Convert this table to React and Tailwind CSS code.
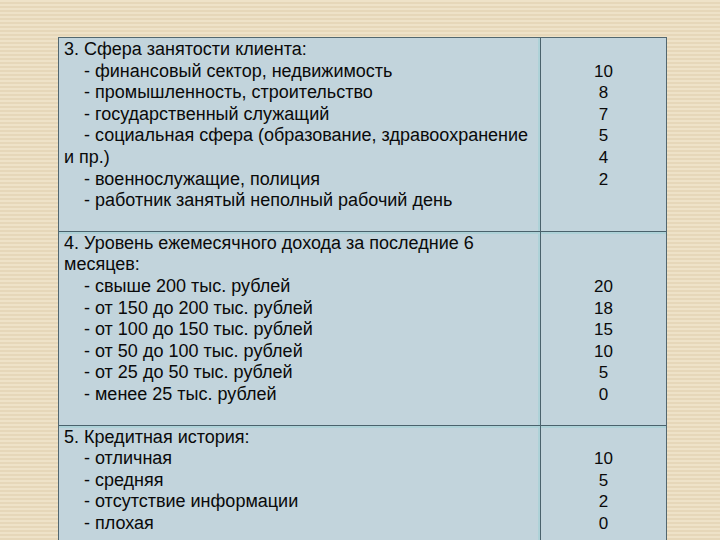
import React from "react";

const rows = [
  {
    lines: [
      { t: "3. Сфера занятости клиента:", i: false },
      { t: "- финансовый сектор, недвижимость", i: true },
      { t: "- промышленность, строительство", i: true },
      { t: "- государственный служащий", i: true },
      { t: "- социальная сфера (образование, здравоохранение", i: true },
      { t: "и пр.)", i: false },
      { t: "- военнослужащие, полиция", i: true },
      { t: "- работник занятый неполный рабочий день", i: true },
    ],
    skip: 1,
    nums: ["10", "8", "7", "5", "4", "2"],
  },
  {
    lines: [
      { t: "4. Уровень ежемесячного дохода за последние 6", i: false },
      { t: "месяцев:", i: false },
      { t: "- свыше 200 тыс. рублей", i: true },
      { t: "- от 150 до 200 тыс. рублей", i: true },
      { t: "- от 100 до 150 тыс. рублей", i: true },
      { t: "- от 50 до 100 тыс. рублей", i: true },
      { t: "- от 25 до 50 тыс. рублей", i: true },
      { t: "- менее 25 тыс. рублей", i: true },
    ],
    skip: 2,
    nums: ["20", "18", "15", "10", "5", "0"],
  },
  {
    lines: [
      { t: "5. Кредитная история:", i: false },
      { t: "- отличная", i: true },
      { t: "- средняя", i: true },
      { t: "- отсутствие информации", i: true },
      { t: "- плохая", i: true },
    ],
    skip: 1,
    nums: ["10", "5", "2", "0"],
  },
];

export default function App() {
  return (
    <div className="w-[720px] h-[540px] overflow-hidden bg-[repeating-linear-gradient(180deg,#eee2c8_0px,#eee2c8_2px,#e6d7b9_2px,#e6d7b9_4px)] pl-[58px] pt-[37px]">
      <div
        className="w-[609px] border border-[#52676f] bg-[#c2d4dc] text-[18px] leading-[21.6px] text-[#0a0a0a]"
        style={{ fontFamily: '"Liberation Sans", Arial, sans-serif' }}
      >
        {rows.map((r, idx) => (
          <div
            key={idx}
            className={
              "flex " +
              (idx < rows.length - 1 ? "border-b border-[#4a626c] " : "") +
              (idx > 0 ? "shadow-[inset_0_2px_0_#aed2d8]" : "")
            }
          >
            <div className="w-[482px] border-r border-[#4a626c] shadow-[inset_-2px_0_0_#aed2d8] pl-[5px] pt-[1px] pb-[19px]">
              {r.lines.map((l, j) => (
                <div key={j} className={"whitespace-nowrap " + (l.i ? "pl-[20px]" : "")}>
                  {l.t}
                </div>
              ))}
            </div>
            <div className="flex-1 flex flex-col items-center pt-[1px] pb-[19px] text-[17px]">
              {Array.from({ length: r.skip }).map((_, k) => (
                <div key={"s" + k} className="h-[21.6px]" />
              ))}
              {r.nums.map((n, k) => (
                <div key={k}>{n}</div>
              ))}
            </div>
          </div>
        ))}
      </div>
    </div>
  );
}
